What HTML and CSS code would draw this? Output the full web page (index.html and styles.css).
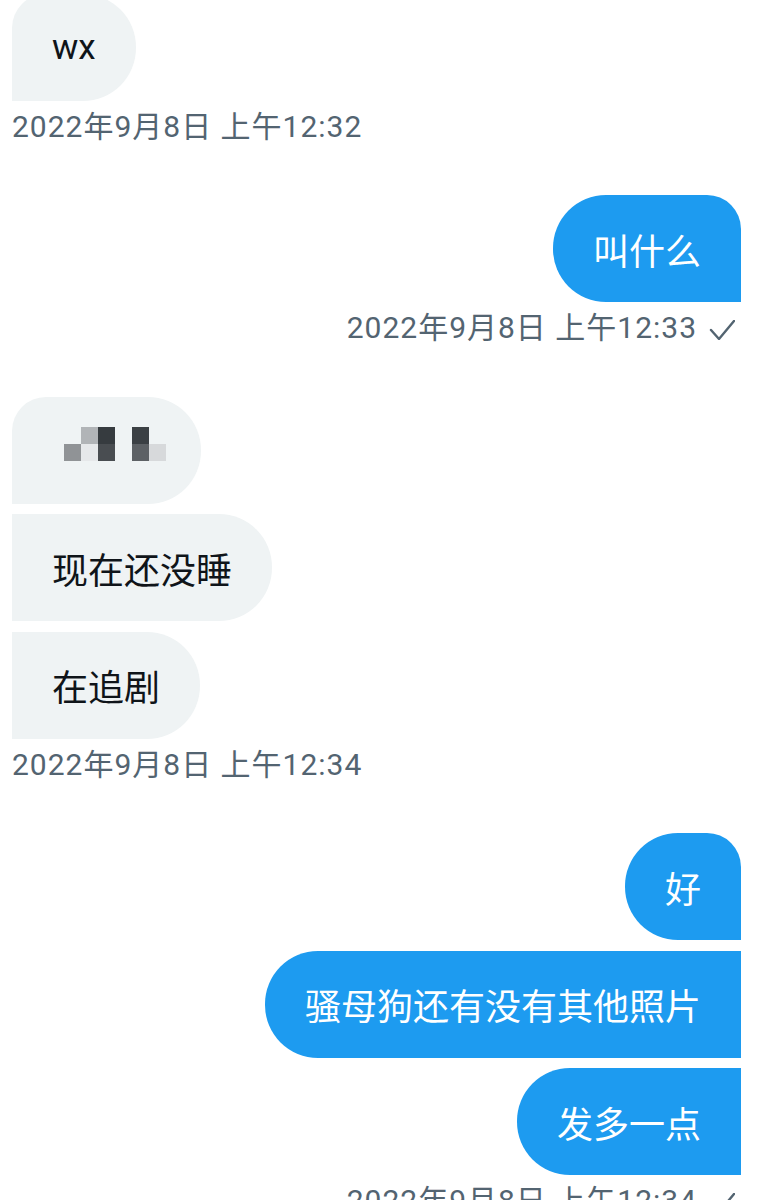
FILE: index.html
```html
<!DOCTYPE html>
<html lang="zh-CN">
<head>
<meta charset="utf-8">
<title>Messages</title>
<link rel="stylesheet" href="styles.css">
</head>
<body>
<main class="chat">
  <section class="group recv">
    <div class="bubble recv-bubble first-cut"><span class="latin">wx</span></div>
    <div class="stamp">2022年9月8日 上午12:32</div>
  </section>

  <section class="group sent">
    <div class="bubble sent-bubble first">叫什么</div>
    <div class="stamp"><span>2022年9月8日 上午12:33</span><svg class="check" width="26" height="20" viewBox="0 0 26 20"><polyline points="2,10 10,19 25,1" fill="none" stroke="#536471" stroke-width="2.4" stroke-linecap="round" stroke-linejoin="round"/></svg></div>
  </section>

  <section class="group recv">
    <div class="bubble recv-bubble first media">
      <div class="pixels" aria-label="blurred">
        <i></i><i class="p1"></i><i class="p2"></i><i></i><i class="p3"></i><i></i>
        <i class="p4"></i><i class="p5"></i><i class="p6"></i><i></i><i class="p7"></i><i class="p8"></i>
      </div>
    </div>
    <div class="bubble recv-bubble">现在还没睡</div>
    <div class="bubble recv-bubble">在追剧</div>
    <div class="stamp">2022年9月8日 上午12:34</div>
  </section>

  <section class="group sent">
    <div class="bubble sent-bubble first">好</div>
    <div class="bubble sent-bubble">骚母狗还有没有其他照片</div>
    <div class="bubble sent-bubble">发多一点</div>
    <div class="stamp"><span>2022年9月8日 上午12:34</span><svg class="check" width="26" height="20" viewBox="0 0 26 20"><polyline points="2,10 10,19 25,1" fill="none" stroke="#536471" stroke-width="2.4" stroke-linecap="round" stroke-linejoin="round"/></svg></div>
  </section>
</main>
</body>
</html>
```
FILE: styles.css
```css
html, body {
  margin: 0;
  padding: 0;
  background: #ffffff;
}
body {
  width: 783px;
  height: 1200px;
  overflow: hidden;
  font-family: Roboto, "Noto Sans CJK SC", sans-serif;
}
.chat {
  display: flex;
  flex-direction: column;
  gap: 50.5px;
  padding: 0 42px 0 12px;
  margin-top: -6.5px;
}
.group {
  display: flex;
  flex-direction: column;
  gap: 10.5px;
}
.group.recv { align-items: flex-start; }
.group.sent { align-items: flex-end; }

.bubble {
  box-sizing: border-box;
  height: 107px;
  padding: 0 40px;
  display: flex;
  align-items: center;
  font-size: 36px;
  font-family: "Noto Sans CJK SC", sans-serif;
  white-space: nowrap;
}
.recv-bubble {
  background: #eff3f4;
  color: #0f1419;
  border-radius: 0 53px 53px 0;
}
.recv-bubble.first { border-top-left-radius: 34px; }
.recv-bubble.first-cut { border-top-left-radius: 34px; }
.recv-bubble.media { padding-right: 35px; }
.sent-bubble {
  background: #1d9bf0;
  color: #ffffff;
  border-radius: 53px 0 0 53px;
}
.sent-bubble.first { border-top-right-radius: 34px; }

.latin {
  font-family: Roboto, sans-serif;
  font-size: 35px;
}

.pixels {
  display: grid;
  grid-template-columns: repeat(6, 17px);
  grid-template-rows: repeat(2, 17px);
  margin-left: 12px;
  margin-bottom: 12px;
}
.pixels i { display: block; }
.pixels .p1 { background: #b1b4b7; }
.pixels .p2 { background: #363b3f; }
.pixels .p3 { background: #3b4044; }
.pixels .p4 { background: #909396; }
.pixels .p5 { background: #e6e8ea; }
.pixels .p6 { background: #494d51; }
.pixels .p7 { background: #5d6165; }
.pixels .p8 { background: #d7d9db; }

.stamp {
  margin-top: -2.5px;
  height: 36px;
  line-height: 36px;
  font-size: 30px;
  letter-spacing: 1px;
  color: #536471;
  display: flex;
  align-items: center;
  gap: 12px;
  white-space: nowrap;
}
.group.sent .stamp { margin-right: 6px; }
.check { display: block; margin-top: 4px; }
```
